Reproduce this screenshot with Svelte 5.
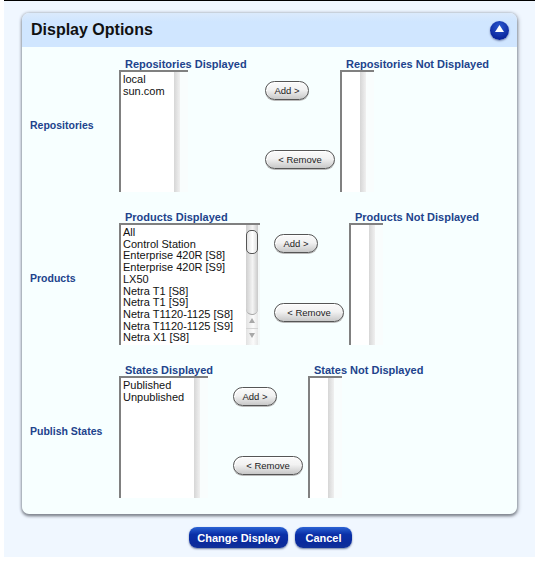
<script>
	const products = ['All', 'Control Station', 'Enterprise 420R [S8]', 'Enterprise 420R [S9]', 'LX50', 'Netra T1 [S8]', 'Netra T1 [S9]', 'Netra T1120-1125 [S8]', 'Netra T1120-1125 [S9]', 'Netra X1 [S8]']

	const sections = [
		{ label: 'Repositories', shown: 'Repositories Displayed', hidden: 'Repositories Not Displayed', items: ['local', 'sun.com'], kind: 'repos' },
		{ label: 'Products', shown: 'Products Displayed', hidden: 'Products Not Displayed', items: products, kind: 'products' },
		{ label: 'Publish States', shown: 'States Displayed', hidden: 'States Not Displayed', items: ['Published', 'Unpublished'], kind: 'states' }
	]
</script>

<div class="page">
	<div class="panel">
		<div class="head">
			<h1>Display Options</h1>
			<button class="collapse" aria-label="Collapse">
				<svg width="9" height="7" viewBox="0 0 9 7"><path d="M4.5 0 L9 7 L0 7 Z" fill="#fff" /></svg>
			</button>
		</div>

		<div class="body">
			{#each sections as s}
				<div class="row {s.kind}">
					<div class="label">{s.label}</div>

					<div class="col shown">
						<div class="title">{s.shown}</div>
						<div class="list">
							<div class="items">
								{#each s.items as item}
									<div>{item}</div>
								{/each}
							</div>
							<div class="bar">
								{#if s.kind === 'products'}
									<div class="track"><div class="thumb"></div></div>
									<div class="arrow up"></div>
									<div class="sep"></div>
									<div class="arrow down"></div>
								{/if}
							</div>
						</div>
					</div>

					<div class="moves">
						<button class="move add">Add &gt;</button>
						<button class="move remove">&lt; Remove</button>
					</div>

					<div class="col hidden">
						<div class="title">{s.hidden}</div>
						<div class="list">
							<div class="items"></div>
							<div class="bar"></div>
						</div>
					</div>
				</div>
			{/each}
		</div>
	</div>

	<div class="actions">
		<button class="primary change">Change Display</button>
		<button class="primary cancel">Cancel</button>
	</div>
</div>

<style>
:global(body) {
	margin:0;
	background:#fff;
	font-family:"Liberation Sans", Arial, sans-serif;
}

.page {
	box-sizing:border-box;
	width:531px;
	height:557px;
	margin-left:4px;
	padding:12px 0 0 18px;
	border-top:1px solid #000;
	background:#f0f7ff;
}

.panel {
	width:495px;
	height:501px;
	border-radius:7px;
	background:#f7ffff;
	box-shadow:0 2px 3px #81868f, 1px 1px 4px #a4aab4, -1px 0 3px #ccd5e0, 0 -1px 2px #dce6f2;
}

.head {
	display:flex;
	align-items:center;
	justify-content:space-between;
	box-sizing:border-box;
	height:34px;
	padding:0 8px 0 9px;
	border-radius:7px 7px 0 0;
	background:linear-gradient(#dbeafc, #d0e6ff 25%);
}

h1 {
	margin:0;
	font-size:16px;
	font-weight:bold;
	color:#111;
}

.collapse {
	display:flex;
	align-items:center;
	justify-content:center;
	width:19px;
	height:19px;
	padding:0 0 3px;
	border:0;
	border-radius:50%;
	background:radial-gradient(circle at 50% 30%, #2a58d0, #0a249a 75%);
	box-shadow:0 1px 2px #6d7da8;
}

.body {
	display:flex;
	flex-direction:column;
	gap:17px;
	padding:9px 0 0 8px;
}

.row {
	display:flex;
	height:136px;
}

.label {
	width:89px;
	padding-top:63px;
	font-size:10.5px;
	font-weight:bold;
	color:#21438c;
}

.col {
	display:flex;
	flex-direction:column;
}

.title {
	box-sizing:border-box;
	width:0;
	height:14px;
	padding-left:6px;
	font-size:11px;
	line-height:16px;
	font-weight:bold;
	white-space:nowrap;
	color:#21438c;
}

.list {
	display:flex;
	box-sizing:border-box;
	height:122px;
	border-top:2px solid #808080;
	border-left:2px solid #808080;
	overflow:hidden;
}

.items {
	flex:1;
	padding:2px 0 0 2px;
	background:#fff;
	font-size:11px;
	line-height:11.7px;
	white-space:nowrap;
	color:#111;
	overflow:hidden;
}

.bar {
	position:relative;
	box-sizing:border-box;
	width:14px;
	border-right:8px solid #f9fdfd;
	background:linear-gradient(90deg, #d6d6d6, #f0f0f0);
}

.shown { width:69px; }
.hidden { width:34px; margin-left:5px; }

.repos .shown { width:69px; }
.products .shown { width:141px; }
.states .shown { width:89px; }

.products .shown .bar {
	width:14px;
	border-right:2px solid #f4f8f8;
	background:linear-gradient(90deg, #e2e2e2, #fbfbfb 60%, #e6e6e6);
}

.track {
	box-sizing:border-box;
	height:90px;
	padding-top:5px;
	border-radius:0 0 6px 6px;
	border-bottom:1px solid #a5a5a5;
	background:linear-gradient(90deg, #cfcfcf, #f4f4f4 55%, #c9c9c9);
}

.thumb {
	box-sizing:border-box;
	height:24px;
	border:1px solid #555;
	border-radius:5px;
	background:linear-gradient(90deg, #e4e4e4, #fff 55%, #e0e0e0);
}

.arrow {
	position:absolute;
	left:3px;
	width:0;
	height:0;
	border-left:3px solid transparent;
	border-right:3px solid transparent;
}

.arrow.up {
	top:93px;
	border-bottom:5px solid #a8a8a8;
}

.arrow.down {
	top:108px;
	border-top:5px solid #a8a8a8;
}

.sep {
	position:absolute;
	top:103px;
	left:0;
	right:0;
	height:1px;
	background:#d4d4d4;
}

.moves {
	display:flex;
	flex-direction:column;
	align-items:flex-start;
	justify-content:space-between;
	height:88px;
	margin:25px 0 0 77px;
}

.products .moves { margin-left:14px; }
.states .moves { margin-left:25px; }

.move {
	box-sizing:border-box;
	height:19px;
	padding:0;
	border:1px solid #555;
	border-radius:10px;
	background:linear-gradient(#fafafa, #f2f2f2 45%, #c8c8c8);
	box-shadow:inset 1px 1px 0 #fff, 0 1px 0 #bbb;
	font-family:inherit;
	font-size:9.5px;
	color:#222;
}

.add { width:44px; }
.remove { width:70px; }

.actions {
	display:flex;
	gap:7px;
	margin:13px 0 0 167px;
}

.primary {
	box-sizing:border-box;
	height:21px;
	padding:0;
	border:0;
	border-radius:8px;
	background:linear-gradient(#2a62d4, #0a30a8 35%, #0a2a9c 75%, #10309a);
	box-shadow:0 1px 2px #6f7ea0;
	font-family:inherit;
	font-size:11px;
	font-weight:bold;
	color:#fff;
}

.change { width:99px; }
.cancel { width:57px; }
</style>
